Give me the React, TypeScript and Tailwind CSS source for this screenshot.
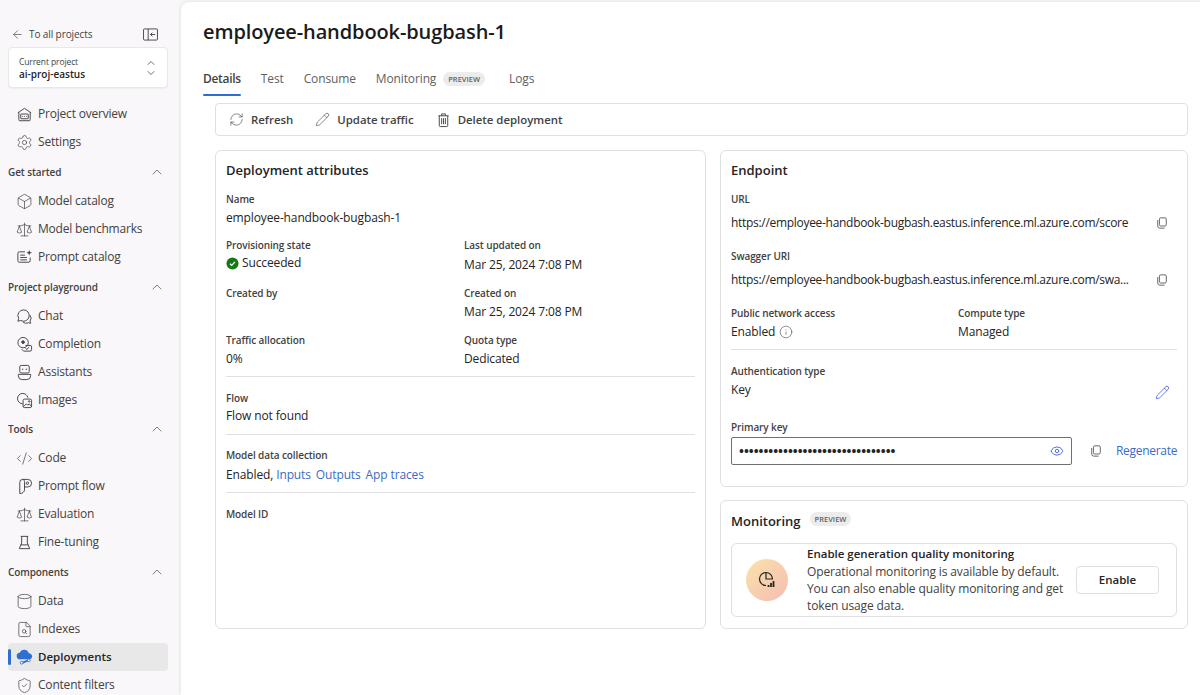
import React from 'react';
import {
  ArrowLeft, Box, ChevronDown, ChevronUp, CodeXml, Cylinder, Eye, FileSearch, Info, Pencil,
  RefreshCw, Scale, Settings, ShieldCheck,
} from 'lucide-react';

const ic = 'h-[17px] w-[17px] text-[#424242]';

function HomeIcon() {
  return (
    <svg viewBox="0 0 18 18" className={ic} fill="none" stroke="currentColor" strokeWidth="1">
      <path d="M2 7.2 9 2.5l7 4.7M3 6.600v8a1 1 0 0 0 1 1h10a1 1 0 0 0 1-1v-8" />
      <rect x="5" y="8.500" width="8" height="5" rx=".5" />
      <path d="M6.500 11h.8M8.600 11h.8M10.700 11h.8" />
    </svg>
  );
}

function PromptCatalogIcon() {
  return (
    <svg viewBox="0 0 18 18" className={ic} fill="none" stroke="currentColor" strokeWidth="1">
      <path d="M9.500 3H3.500a1.500 1.500 0 0 0-1.500 1.500v8A1.500 1.500 0 0 0 3.500 14h10a1.500 1.500 0 0 0 1.500-1.500V9" />
      <path d="M4.500 6.500h5M4.500 9h7M4.500 11.500h7" />
      <path d="M14 1l.8 2.200L17 4l-2.200.8L14 7l-.8-2.200L11 4l2.200-.8z" fill="currentColor" stroke="none" />
    </svg>
  );
}

function ChatIcon() {
  return (
    <svg viewBox="0 0 18 18" className={ic} fill="none" stroke="currentColor" strokeWidth="1">
      <path d="M8 2a6 6 0 0 0-5.200 9L2 14l3-.8A6 6 0 1 0 8 2z" />
      <path d="M14.600 7.500a5 5 0 0 1 .3 6.400l.6 2.300-2.400-.6a5 5 0 0 1-5.600-.6" />
    </svg>
  );
}

function CompletionIcon() {
  return (
    <svg viewBox="0 0 18 18" className={ic} fill="none" stroke="currentColor" strokeWidth="1">
      <circle cx="7.500" cy="7" r="5.500" />
      <circle cx="7.500" cy="6.500" r="1.400" fill="currentColor" />
      <path d="M10 10h5a1.500 1.500 0 0 1 1.500 1.500v3a1.500 1.500 0 0 1-1.500 1.500H8l-2-2" />
      <path d="m10 13 1.500 1.200 2.500-2.400" />
    </svg>
  );
}

function AssistantIcon() {
  return (
    <svg viewBox="0 0 18 18" className={ic} fill="none" stroke="currentColor" strokeWidth="1">
      <rect x="4" y="1.500" width="10" height="8" rx="1.500" />
      <path d="M7 5v1M11 5v1" strokeWidth="1.500" />
      <path d="M2.500 11h13v1.500a4 4 0 0 1-4 4h-5a4 4 0 0 1-4-4z" />
    </svg>
  );
}

function ImagesIcon() {
  return (
    <svg viewBox="0 0 18 18" className={ic} fill="none" stroke="currentColor" strokeWidth="1">
      <path d="M7 12.500A5.500 5.500 0 1 1 12.500 6" />
      <rect x="7.500" y="7.500" width="9" height="9" rx="1.500" />
      <path d="m8 15.500 3-3 1.500 1.500 1.500-1.500 2.500 3" />
      <circle cx="14" cy="10" r=".8" />
    </svg>
  );
}

function FlowIcon() {
  return (
    <svg viewBox="0 0 18 18" className={ic} fill="none" stroke="currentColor" strokeWidth="1">
      <path d="M4 16.500V4.500A3 3 0 0 1 7 1.500h5.500a3 3 0 0 1 0 8H9" />
      <path d="M7 1.500c2 0 2 2 2 3v8c0 2-2 4-5 4" />
      <circle cx="12" cy="5.500" r="1.300" />
    </svg>
  );
}

function BeakerIcon() {
  return (
    <svg viewBox="0 0 18 18" className={ic} fill="none" stroke="currentColor" strokeWidth="1">
      <path d="M5 2.500h8M6 2.500v7L3.500 15.500h11L12 9.500v-7M5 11.500h8" />
    </svg>
  );
}

function CloudIcon() {
  return (
    <svg viewBox="0 0 18 18" className="h-[18px] w-[18px]">
      <path d="M4.500 11.500a3.500 3.500 0 0 1-.5-7A5 5 0 0 1 13.500 5a3.300 3.300 0 0 1 1 6.500z" fill="#2f6fd0" />
      <path d="m6 15.500 8-3.500" stroke="#2f6fd0" strokeWidth="2" fill="none" />
      <circle cx="6" cy="15" r="1.500" fill="#fff" stroke="#2f6fd0" />
      <circle cx="13.500" cy="12.500" r="1.500" fill="#fff" stroke="#2f6fd0" />
    </svg>
  );
}

function TrashIcon() {
  return (
    <svg viewBox="0 0 16 16" className="h-[16px] w-[16px]" fill="none" stroke="currentColor" strokeWidth="1">
      <path d="M2.500 3.500h11M6 3.500V1.500h4v2M3.500 3.500v10.500a1 1 0 0 0 1 1h7a1 1 0 0 0 1-1V3.500" />
      <path d="M6 6v6.500M8 6v6.500M10 6v6.500" />
    </svg>
  );
}

function CopyBtn() {
  return (
    <svg viewBox="0 0 14 14" className="h-[12px] w-[12px] text-[#616161]" fill="none" stroke="currentColor" strokeWidth="1.100">
      <rect x="4" y="1" width="8" height="9.500" rx="1.500" />
      <path d="M2 3.500v7A2.500 2.500 0 0 0 4.500 13H10" />
    </svg>
  );
}

function Item({ icon, label, active }: { icon: React.ReactNode; label: string; active?: boolean }) {
  return (
    <div className={`relative ml-[8px] mr-[13px] flex h-[28px] shrink-0 items-center gap-[5px] rounded-[4px] pl-[8px] ${active ? 'bg-[#e8e8e8] font-semibold text-[#242424]' : 'text-[#424242]'}`}>
      {active && <span className="absolute left-0 top-[6px] h-[16px] w-[3px] rounded-full bg-[#2f6fd0]" />}
      <span className="flex w-[17px] justify-center">{icon}</span>
      <span className={active ? 'text-[11.5px]' : 'text-[12px] tracking-[-0.2px]'}>{label}</span>
    </div>
  );
}

function Section({ title, tight, children }: { title: string; tight?: boolean; children: React.ReactNode }) {
  return (
    <div className={`${tight ? '' : 'mt-[1px]'} shrink-0`}>
      <div className="flex h-[30px] items-center justify-between pl-[8px] pr-[16px] text-[10px] font-semibold tracking-[-0.1px] text-[#424242]">
        <span>{title}</span>
        <ChevronUp className="h-[16px] w-[16px]" strokeWidth={1} />
      </div>
      {children}
    </div>
  );
}

function Sidebar() {
  return (
    <aside className="flex w-[181px] shrink-0 flex-col overflow-hidden pt-[24px]">
      <div className="flex h-[20px] shrink-0 items-center justify-between pl-[11px] pr-[23px] text-[10px] tracking-[-0.1px] text-[#424242]">
        <div className="flex items-center gap-[5px]">
          <ArrowLeft className="h-[13px] w-[13px]" strokeWidth={1.2} />
          <span>To all projects</span>
        </div>
        <svg viewBox="0 0 16 14" className="h-[13px] w-[15px]" fill="none" stroke="#424242" strokeWidth="1">
          <rect x=".5" y="1" width="15" height="12" rx="1" />
          <path d="M5.500 1v12M13 7H8M10 5 8 7l2 2" />
        </svg>
      </div>
      <div className="ml-[8px] mr-[13px] mt-[3px] flex h-[41px] shrink-0 items-center justify-between rounded-[4px] border border-[#e8e8e8] bg-white pl-[10px] pr-[10px] shadow-[0_1px_1px_rgba(0,0,0,0.04)]">
        <div className="leading-[13px]">
          <div className="text-[8.500px] tracking-[-0.1px] text-[#424242]">Current project</div>
          <div className="text-[10px] font-semibold text-[#242424]">ai-proj-eastus</div>
        </div>
        <div className="flex flex-col text-[#424242]">
          <ChevronUp className="-mb-[2px] h-[12px] w-[12px]" strokeWidth={1.5} />
          <ChevronDown className="h-[12px] w-[12px]" strokeWidth={1.5} />
        </div>
      </div>
      <div className="mt-[12px] shrink-0">
        <Item icon={<HomeIcon />} label="Project overview" />
        <Item icon={<Settings className={ic} strokeWidth={1} />} label="Settings" />
      </div>
      <Section title="Get started">
        <Item icon={<Box className={ic} strokeWidth={1} />} label="Model catalog" />
        <Item icon={<Scale className={ic} strokeWidth={1} />} label="Model benchmarks" />
        <Item icon={<PromptCatalogIcon />} label="Prompt catalog" />
      </Section>
      <Section title="Project playground">
        <Item icon={<ChatIcon />} label="Chat" />
        <Item icon={<CompletionIcon />} label="Completion" />
        <Item icon={<AssistantIcon />} label="Assistants" />
        <Item icon={<ImagesIcon />} label="Images" />
      </Section>
      <Section title="Tools" tight>
        <Item icon={<CodeXml className={ic} strokeWidth={1} />} label="Code" />
        <Item icon={<FlowIcon />} label="Prompt flow" />
        <Item icon={<Scale className={ic} strokeWidth={1} />} label="Evaluation" />
        <Item icon={<BeakerIcon />} label="Fine-tuning" />
      </Section>
      <Section title="Components">
        <Item icon={<Cylinder className={ic} strokeWidth={1} />} label="Data" />
        <Item icon={<FileSearch className={ic} strokeWidth={1} />} label="Indexes" />
        <Item icon={<CloudIcon />} label="Deployments" active />
        <Item icon={<ShieldCheck className={ic} strokeWidth={1} />} label="Content filters" />
      </Section>
    </aside>
  );
}

function Field({ label, children, className = '', gap = 'mt-[2px]' }: { label: string; children?: React.ReactNode; className?: string; gap?: string }) {
  return (
    <div className={className}>
      <div className="text-[10px] font-semibold leading-[14px] tracking-[-0.1px] text-[#424242]">{label}</div>
      <div className={`${gap} whitespace-nowrap text-[12px] leading-[20px] tracking-[-0.13px] text-[#242424]`}>{children}</div>
    </div>
  );
}

function Preview() {
  return (
    <span className="rounded-full bg-[#ececec] px-[5px] text-[7.500px] font-semibold leading-[14px] tracking-normal text-[#616161]">PREVIEW</span>
  );
}

function ToolBtn({ icon, label }: { icon: React.ReactNode; label: string }) {
  return (
    <div className="flex items-center gap-[7px] text-[11.400px] font-semibold text-[#424242]">
      <span className="flex w-[15px] justify-center">{icon}</span>
      <span>{label}</span>
    </div>
  );
}

function Attributes() {
  return (
    <section className="h-[479px] w-[491px] shrink-0 rounded-[6px] border border-[#e0e0e0] px-[10px] pt-[9px]">
      <h2 className="text-[13px] font-semibold leading-[20px] text-[#242424]">Deployment attributes</h2>
      <Field label="Name" className="mt-[12px]">employee-handbook-bugbash-1</Field>
      <div className="mt-[10px] grid grid-cols-[238px_1fr] gap-y-[11px]">
        <Field label="Provisioning state" gap="mt-[1px]">
          <span className="flex items-center gap-[3px]">
            <svg viewBox="0 0 14 14" className="h-[13px] w-[13px]">
              <circle cx="7" cy="7" r="6.500" fill="#107c10" />
              <path d="m4.300 7.200 1.900 1.800 3.500-3.700" stroke="#fff" strokeWidth="1.400" fill="none" />
            </svg>
            Succeeded
          </span>
        </Field>
        <Field label="Last updated on" gap="mt-[3px]">Mar 25, 2024 7:08 PM</Field>
        <Field label="Created by" />
        <Field label="Created on">Mar 25, 2024 7:08 PM</Field>
        <Field label="Traffic allocation">0%</Field>
        <Field label="Quota type">Dedicated</Field>
      </div>
      <div className="mt-[7px] border-t border-[#e0e0e0] pt-[14px]">
        <Field label="Flow" gap="mt-[1px]">Flow not found</Field>
      </div>
      <div className="mt-[8px] border-t border-[#e0e0e0] pt-[13px]">
        <Field label="Model data collection" gap="mt-[3px]">
          Enabled, <span className="text-[#3b6cc4]">Inputs</span> <span className="ml-[2px] text-[#3b6cc4]">Outputs</span> <span className="ml-[2px] text-[#3b6cc4]">App traces</span>
        </Field>
      </div>
      <div className="mt-[7px] border-t border-[#e0e0e0] pt-[14px]">
        <Field label="Model ID" />
      </div>
    </section>
  );
}

function Endpoint() {
  return (
    <section className="h-[337px] rounded-[6px] border border-[#e0e0e0] px-[10px] pt-[9px]">
      <h2 className="text-[13px] font-semibold leading-[20px] text-[#242424]">Endpoint</h2>
      <Field label="URL" className="mt-[12px]" gap="mt-[7px]">
        <span className="flex items-center justify-between pr-[9px]">
          <span className="tracking-[-0.3px]">https://employee-handbook-bugbash.eastus.inference.ml.azure.com/score</span>
          <CopyBtn />
        </span>
      </Field>
      <Field label="Swagger URI" className="mt-[16px]" gap="mt-[7px]">
        <span className="flex items-center justify-between pr-[9px]">
          <span className="tracking-[-0.3px]">https://employee-handbook-bugbash.eastus.inference.ml.azure.com/swa...</span>
          <CopyBtn />
        </span>
      </Field>
      <div className="mt-[16px] grid grid-cols-[227px_1fr]">
        <Field label="Public network access">
          <span className="flex items-center gap-[4px]">
            Enabled <Info className="h-[14px] w-[14px] text-[#424242]" strokeWidth={1} />
          </span>
        </Field>
        <Field label="Compute type">Managed</Field>
      </div>
      <div className="mt-[7px] flex items-end justify-between border-t border-[#e0e0e0] pt-[14px]">
        <Field label="Authentication type">Key</Field>
        <Pencil className="mr-[7px] h-[15px] w-[15px] text-[#4f6bed]" strokeWidth={1.4} />
      </div>
      <div className="mt-[20px] text-[10px] font-semibold leading-[14px] tracking-[-0.1px] text-[#424242]">Primary key</div>
      <div className="mt-[3px] flex items-center">
        <div className="flex h-[28px] w-[341px] shrink-0 items-center justify-between rounded-[2px] border border-[#707070] px-[7px]">
          <span className="text-[13px] font-bold leading-none text-[#242424]">{'•'.repeat(32)}</span>
          <Eye className="h-[14px] w-[14px] text-[#4f6bed]" strokeWidth={1.7} />
        </div>
        <span className="ml-[18px] flex"><CopyBtn /></span>
        <span className="ml-[14px] whitespace-nowrap text-[12px] tracking-[-0.3px] text-[#3b6cc4]">Regenerate</span>
      </div>
    </section>
  );
}

function Monitoring() {
  return (
    <section className="h-[129px] rounded-[6px] border border-[#e0e0e0] px-[10px] pt-[10px]">
      <div className="flex items-center gap-[9px]">
        <h2 className="text-[13px] font-semibold leading-[20px] text-[#242424]">Monitoring</h2>
        <span className="-mt-[4px] flex"><Preview /></span>
      </div>
      <div className="mt-[12px] flex h-[74px] items-center rounded-[6px] border border-[#e0e0e0] pl-[14px] pr-[17px]">
        <div className="flex h-[42px] w-[42px] shrink-0 items-center justify-center rounded-full bg-gradient-to-br from-[#fbe3a8] to-[#f3bcb4]">
          <svg viewBox="0 0 20 20" className="h-[20px] w-[20px]" fill="none" stroke="#242424" strokeWidth="1.200">
            <path d="M9 2.500a6.500 6.500 0 1 0 0 13" />
            <path d="M9 2.500V9h6.500A6.500 6.500 0 0 0 9 2.500z" />
            <path d="M11.500 17v-2M14 17v-4M16.500 17v-6" strokeWidth="1.800" />
          </svg>
        </div>
        <div className="ml-[19px] w-[258px] text-[12px] leading-[17.300px] tracking-[-0.13px] text-[#424242]">
          <div className="text-[11.500px] font-semibold tracking-normal text-[#242424]">Enable generation quality monitoring</div>
          <div>Operational monitoring is available by default. You can also enable quality monitoring and get token usage data.</div>
        </div>
        <div className="ml-auto flex h-[28px] w-[83px] items-center justify-center rounded-[4px] border border-[#e0e0e0] text-[11.500px] font-semibold text-[#242424]">Enable</div>
      </div>
    </section>
  );
}

export default function App() {
  return (
    <div className="flex h-[695px] w-[1200px] overflow-hidden bg-[#f9f7f9] font-['Open_Sans',sans-serif]">
      <Sidebar />
      <main className="mt-[2px] min-w-0 flex-1 rounded-tl-[8px] bg-white pl-[22px] pr-[12px] shadow-[0_0_4px_rgba(0,0,0,0.12)]">
        <h1 className="pt-[15px] text-[20px] font-semibold leading-[30px] tracking-[-0.11px] text-[#1b1b1b]">employee-handbook-bugbash-1</h1>
        <div className="mt-[16px] flex h-[33px] items-start gap-[20px] text-[12px] tracking-[-0.13px] text-[#616161]">
          <div className="relative h-[33px] pt-[6px] font-semibold leading-[20px] tracking-[-0.3px] text-[#424242]">
            Details
            <span className="absolute bottom-0 left-0 right-0 h-[2px] rounded-full bg-[#2f6fd0]" />
          </div>
          <div className="pt-[6px] leading-[20px]">Test</div>
          <div className="pt-[6px] leading-[20px]">Consume</div>
          <div className="flex items-center gap-[7px] pt-[6px] leading-[20px]">Monitoring <Preview /></div>
          <div className="ml-[4px] pt-[6px] leading-[20px]">Logs</div>
        </div>
        <div className="ml-[12px]">
          <div className="mt-[7px] flex h-[33px] items-center gap-[22px] rounded-[4px] border border-[#e0e0e0] pl-[13px] pt-[1px]">
            <ToolBtn icon={<RefreshCw className="h-[15px] w-[15px]" strokeWidth={1} />} label="Refresh" />
            <ToolBtn icon={<Pencil className="h-[15px] w-[15px]" strokeWidth={1} />} label="Update traffic" />
            <ToolBtn icon={<TrashIcon />} label="Delete deployment" />
          </div>
          <div className="mt-[14px] flex gap-[14px]">
            <Attributes />
            <div className="flex min-w-0 flex-1 flex-col gap-[13px]">
              <Endpoint />
              <Monitoring />
            </div>
          </div>
        </div>
      </main>
    </div>
  );
}
